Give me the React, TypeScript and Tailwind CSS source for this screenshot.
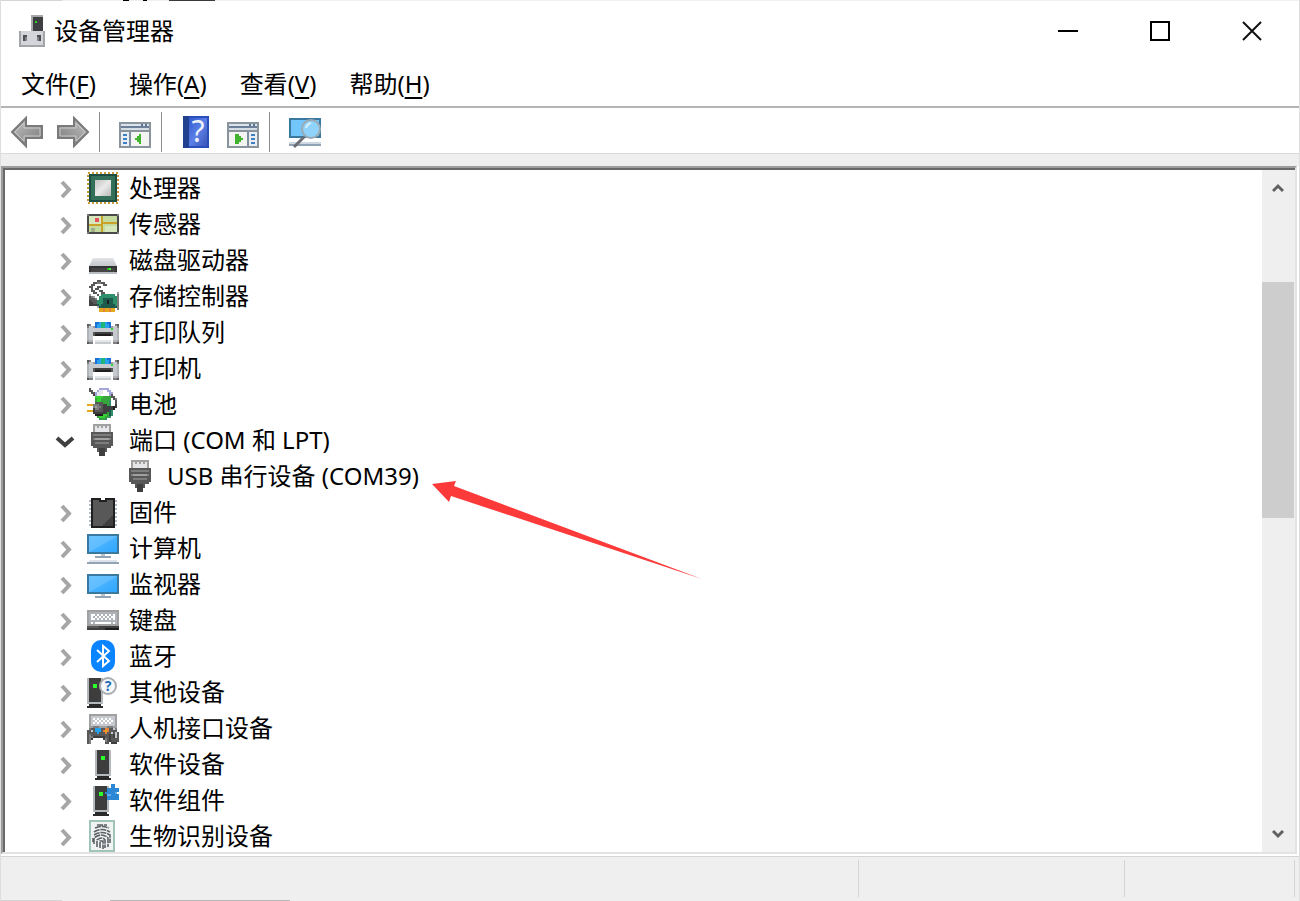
import React from 'react';

const palette: Record<string, string> = {
  k: '#1f1f1f',
  d: '#3f3f3f',
  m: '#585858',
  n: '#7d7d7d',
  g: '#a0a0a0',
  h: '#aeb4ba',
  l: '#c6c9cd',
  e: '#e4e6e9',
  w: '#ffffff',
  a: '#b4bccb',
  b: '#1b6fd6',
  c: '#27a3ee',
  t: '#1fb47a',
  r: '#e8833a',
  G: '#35d435',
  s: '#2f8f6a',
  S: '#35a53c',
  p: '#1f5b4d',
  y: '#e3a81c',
  v: '#a4a6dc',
};

// 16x16 bitmaps, one character per pixel
const usbMap = [
  '...ggggggggg....',
  '...gegegegeg....',
  '...geeeeeeeg....',
  '...geeeeeeeg....',
  '..mmmmmmmmmmm...',
  '..mnnnnnnnnnm...',
  '..mmmmmmmmmmm...',
  '..mngggggggnm...',
  '..mmmmmmmmmmm...',
  '..mmnnnnnnnmm...',
  '..mmmmmmmmmmm...',
  '...mmmmmmmmm....',
  '.....mdddm......',
  '.....mdddm......',
  '......ddd.......',
  '......ddd.......',
];

const printerMap = [
  '................',
  '................',
  '................',
  '....bbcttcbb....',
  'mn..bccttccb..nm',
  'nllgbccttccbglln',
  'hlllllllllllGllh',
  'hllllllllllllllh',
  'hllmddddddddmllh',
  'hllmkkkkkkkkmllh',
  'hll.wwwwwwww.llh',
  'hll.wwwwwwww.llh',
  'ghh.eeeeeeee.hhg',
  'mnn.llllllll.nnm',
  '................',
  '................',
];

const storageMap = [
  '.....mm.........',
  '...mmnnmm.......',
  '..mm....mm......',
  '.mm..mm.........',
  '..m.mm..........',
  '..mm..mm........',
  '...mm..mm......g',
  '.g...m.sssssss.n',
  '.mng..sssssssssn',
  '.mmmn.sspppppssn',
  '.dmmmsssppkppssn',
  '.ddmmsssppkppssn',
  '.ddddpspppppppsn',
  '.....gpppppppppn',
  '......yyryyryy.n',
  '......yyryyryy..',
];

const batteryMap = [
  '.m....vvvvv.....',
  '.mm..veewwvv....',
  '..mmveeewwwvv...',
  '...dveewwwwvm...',
  '....GGGGSSSSmm..',
  '....SGGSSSSS.mn.',
  '....SGGSSSSs..m.',
  '....mmmmSSSs..m.',
  'yyynnnmmddSs..d.',
  '...ngnnmdddddkd.',
  '...dnnmmdddddk..',
  'yyydmmmmdddps...',
  '...dddddddSps...',
  '....kkkkGGSps...',
  '.....SGGGSSs....',
  '......sSSs......',
];

const firmwareMap = [
  '................',
  '..kkkkk..kkkkk..',
  '.akmmmkkkkmmmka.',
  '..kmmmmmmmmmmk..',
  '.akmmmmmmmmmmka.',
  '..kmmmmmmmmmmk..',
  '.akmmmmmmmmmmka.',
  '..kmmmmmmmmmmk..',
  '.akmmmmmmmmmmka.',
  '..kmmmmmmmmmmk..',
  '.akmmmmmmmmmdka.',
  '..kmmmmmmmmddk..',
  '.akmmmmmmmdddka.',
  '..kmmmmmmddddk..',
  '.akmmmmmdddddka.',
  '..kkkkkkkkkkkk..',
];

const hidMap = [
  '................',
  '.gggggggggggggg.',
  '.gllllllllllllg.',
  '.glwlwlwlwlwllg.',
  '.gllwlwlwlwlwlg.',
  '.glwlwlwlwlwllg.',
  '.gllllllllllllg.',
  '.ggnnnggggnnngg.',
  '.nmmcccmmrrmmln.',
  'mmlmcccmryrmmmm.',
  'mmmmmcmmmrmmlmlm',
  'mnmmmmmmmmmdmdlm',
  'mnnddddddmmdmdlm',
  'mnd.....dnmdmmmm',
  'mn.......nmdmmmm',
  'mn.......mm.ddd.',
];

const keyboardMap = [
  '................',
  '................',
  '................',
  'gggggggggggggggg',
  'ghhhhhhhhhhhhhhg',
  'ghwwhwhwhwhwhwhg',
  'ghwhwhwhwhwhwwhg',
  'ghwwhwhwhwhwhwhg',
  'ghhhhhhhhhhhhhhg',
  'ghwhwwwwwwwwhwhg',
  'gggggggggggggggg',
  'mmmmmmdddddddddd',
  'dddddddddkkkkkkk',
  '................',
  '................',
  '................',
];

const Svg: React.FC<{ children: React.ReactNode }> = ({ children }) => (
  <svg viewBox="0 0 16 16" className="size-8 shrink-0 overflow-visible" aria-hidden="true">
    {children}
  </svg>
);

const Bitmap: React.FC<{ map: string[] }> = ({ map }) => (
  <Svg>
    <g shapeRendering="crispEdges">
      {map.flatMap((line, y) =>
        line.split('').map((ch, x) =>
          ch === '.' ? null : <rect key={`${x}-${y}`} x={x} y={y} width="1" height="1" fill={palette[ch]} />,
        ),
      )}
    </g>
  </Svg>
);

const CpuIcon = () => (
  <Svg>
    <defs>
      <linearGradient id="cpu" x1="0" y1="0" x2="1" y2="1">
        <stop offset="0" stopColor="#c2c2c2" />
        <stop offset="0.5" stopColor="#e9e9e9" />
        <stop offset="1" stopColor="#b9b9b9" />
      </linearGradient>
    </defs>
    <rect x="0.5" y="0.5" width="15" height="15" fill="none" stroke="#c99a3c" strokeDasharray="1 1" />
    <rect x="1" y="1" width="14" height="14" fill="#1d4d40" />
    <rect x="2" y="2" width="12" height="12" fill="#346f5a" />
    <rect x="4" y="4" width="8" height="8" fill="url(#cpu)" />
  </Svg>
);

const SensorIcon = () => (
  <Svg>
    <rect y="3" width="16" height="10" fill="#4a4a4a" />
    <rect x="1" y="4" width="14" height="8" fill="#c4dba0" />
    <path d="M1 4h6v4H1zM9 9h6v3H9z" fill="#d6e7bb" />
    <path d="M7 4h1v8H7zM1 8h7V7h7v1H8v1H1z" fill="#c9a227" />
    <path d="M4 5h2v2H4z" fill="#e8505b" />
    <path d="M2 10h2v2H2z" fill="#9db08a" />
    <path d="M0 3h1v1H0zM15 3h1v1h-1zM0 12h1v1H0zM15 12h1v1h-1z" fill="#7b7b7b" />
  </Svg>
);

const DiskIcon = () => (
  <Svg>
    <defs>
      <linearGradient id="disk" x1="0" y1="0" x2="0" y2="1">
        <stop offset="0" stopColor="#e2e4e6" />
        <stop offset="1" stopColor="#c3c7cb" />
      </linearGradient>
    </defs>
    <path d="M3 7h10l2 4H1z" fill="url(#disk)" />
    <rect x="1" y="11" width="14" height="4" fill="#b9bdc2" />
    <rect x="1" y="11" width="14" height="3" fill="#333" />
    <rect x="2" y="12" width="12" height="2" fill="#444" />
    <rect x="10" y="12" width="2" height="1" fill="#2fae2f" />
    <rect x="11" y="12" width="1" height="1" fill="#3df53d" />
  </Svg>
);

const Screen: React.FC<{ y: number }> = ({ y }) => (
  <g>
    <defs>
      <linearGradient id={`screen${y}`} x1="0" y1="0" x2="1" y2="1">
        <stop offset="0" stopColor="#6cc3ff" />
        <stop offset="0.5" stopColor="#5fbcff" />
        <stop offset="0.52" stopColor="#45b1ff" />
        <stop offset="1" stopColor="#2ea6ff" />
      </linearGradient>
    </defs>
    <rect y={y} width="16" height="10" fill="#3b789f" />
    <rect x="1" y={y + 1} width="14" height="8" fill={`url(#screen${y})`} />
    <rect x="7" y={y + 10} width="2" height="1" fill="#b9c4ce" />
    <rect x="4" y={y + 11} width="8" height="1" fill="#93a5b5" />
  </g>
);

const ComputerIcon = () => (
  <Svg>
    <Screen y={1} />
    <rect y="15" width="16" height="1" fill="#90a4b6" />
    <rect x="1" y="14" width="14" height="1" fill="#dde3e9" />
  </Svg>
);

const MonitorIcon = () => (
  <Svg>
    <Screen y={3} />
  </Svg>
);

const BluetoothIcon = () => (
  <Svg>
    <rect x="2" width="12" height="16" rx="5" fill="#0a84ff" />
    <path d="M5 5l6 5.500L8 13V3l3 2.500L5 11" fill="none" stroke="#fff" />
  </Svg>
);

const Tower: React.FC<{ x: number }> = ({ x }) => (
  <g>
    <rect x={x} y="1" width="8" height="13" fill="#b3b8bd" />
    <rect x={x + 1} y="1" width="6" height="12" fill="#3d3d3d" />
    <rect x={x + 1} y="14" width="6" height="1" fill="#2a2a2a" />
    <rect x={x} y="15" width="8" height="1" fill="#2a2a2a" />
    <rect x={x + 3} y="4" width="2" height="2" fill="#2dfc2d" />
  </g>
);

const OtherIcon = () => (
  <Svg>
    <Tower x={0} />
    <circle cx="10.5" cy="5" r="4" fill="#f6f8fa" stroke="#a9adb1" />
    <text x="10.5" y="7.5" textAnchor="middle" fontSize="7" fontWeight="700" fill="#1f6fb8">
      ?
    </text>
  </Svg>
);

const SoftwareIcon = () => (
  <Svg>
    <Tower x={4} />
  </Svg>
);

const ComponentIcon = () => (
  <Svg>
    <Tower x={3} />
    <path d="M10 2h2V0h2v2h2v2h-1v1h1v3h-6V5H9V4h1z" fill="#2b87d3" />
    <path d="M10 5h2v1h-2zM14 4h1v1h-1z" fill="#63aeea" />
  </Svg>
);

const FingerprintIcon = () => (
  <Svg>
    <rect x="1" width="13" height="16" fill="#9fc4ba" />
    <rect x="2" y="1" width="11" height="14" fill="#f1f3f3" />
    <g fill="none" stroke="#5c6064" strokeWidth="0.8" strokeDasharray="3 0.4">
      <path d="M5 2.5h5M4 4q3.500-1.500 7 0M3.500 6q4-2.500 8 0M3.500 7.500q4-2.500 8 0v4" />
      <path d="M3.500 12V9q4-3 7 0v4.500M5 13.500V10q2.500-2 4 0v4M6.500 14v-3.500h1.500v4M3 9v2" />
    </g>
  </Svg>
);

const ManagerIcon = () => (
  <Svg>
    <rect x="7" width="6" height="8" fill="#a5a8aa" />
    <rect x="8" y="1" width="5" height="7" fill="#3d3f40" />
    <rect x="9" y="3" width="1" height="1" fill="#2fd32f" />
    <rect x="1" y="8" width="13" height="8" fill="#a3a4a8" />
    <rect x="2" y="8" width="11" height="7" fill="#d4d5da" />
    <path d="M3 10h2v3H3zM10 10h2v3h-2z" fill="#4c4d50" />
    <path d="M4 11h1v2H4zM10 11h1v2h-1z" fill="#85868a" />
  </Svg>
);

const ArrowIcon: React.FC<{ flip?: boolean }> = ({ flip }) => (
  <Svg>
    <defs>
      <linearGradient id="arrow" x1="0" y1="0" x2="1" y2="1">
        <stop offset="0" stopColor="#c4c4c4" />
        <stop offset="1" stopColor="#777" />
      </linearGradient>
    </defs>
    <g transform={flip ? 'translate(16 0) scale(-1 1)' : undefined}>
      <path d="M0.500 8L7.500 1v4h8v6h-8v4z" fill="url(#arrow)" stroke="#7a7a7a" />
      <path d="M2 8l4.500-4.500V6h8v4h-8v2.500z" fill="none" stroke="#c9c9c9" strokeWidth="0.5" />
    </g>
  </Svg>
);

const PaneIcon: React.FC<{ right?: boolean }> = ({ right }) => (
  <Svg>
    <g shapeRendering="crispEdges">
      <rect y="3" width="16" height="13" fill="#8a949c" />
      <rect x="1" y="4" width="14" height="1" fill="#dbe4ec" />
      <path d="M11 4h1v1h-1zM13 4h1v1h-1z" fill="#5b7290" />
      <rect x="1" y="5" width="14" height="1" fill="#6b7f98" />
      <rect x="1" y="6" width="14" height="1" fill="#d6dde4" />
      <rect x="1" y="8" width="14" height="7" fill="#f4f4f2" />
      {right ? (
        <>
          <rect x="10" y="8" width="1" height="7" fill="#7d8ea0" />
          <rect x="11" y="8" width="4" height="7" fill="#e9eef5" />
          <path d="M12 9h2v1h-2zM12 11h2v1h-2zM12 13h2v1h-2z" fill="#3f7fc4" />
          <path d="M4 9h2v1h1v1h1v1H7v1H6v1H4z" fill="#42b32e" />
        </>
      ) : (
        <>
          <rect x="1" y="8" width="4" height="7" fill="#e9eef5" />
          <rect x="5" y="8" width="1" height="7" fill="#7d8ea0" />
          <path d="M2 9h2v1H2zM2 11h2v1H2zM2 13h2v1H2z" fill="#3f7fc4" />
          <path d="M11 9h-1v1H9v1H8v1h1v1h1v1h1z" fill="#42b32e" />
        </>
      )}
    </g>
  </Svg>
);

const HelpIcon = () => (
  <Svg>
    <defs>
      <linearGradient id="help" x1="0" y1="0" x2="1" y2="1">
        <stop offset="0" stopColor="#3159cf" />
        <stop offset="0.5" stopColor="#5c80e6" />
        <stop offset="1" stopColor="#3a55b8" />
      </linearGradient>
    </defs>
    <rect x="1" width="13" height="16" fill="#2b4fb8" />
    <rect x="1" width="3" height="16" fill="#21408f" />
    <rect x="4" y="1" width="9" height="14" fill="url(#help)" />
    <text x="8.500" y="13" textAnchor="middle" fontSize="15" fill="#eef1fb">
      ?
    </text>
  </Svg>
);

const ScanIcon = () => (
  <Svg>
    <rect y="1" width="16" height="10" fill="#3b789f" />
    <rect x="1" y="2" width="14" height="8" fill="#72c6fb" />
    <path d="M0 13h16v1H0z" fill="#cfd8e0" />
    <path d="M0 14h16v1H0z" fill="#8fa3b5" />
    <path d="M7.500 10.500L2.500 15.500" stroke="#6b6f73" strokeWidth="1.500" />
    <circle cx="11" cy="6.500" r="4.500" fill="#8fd2fa" stroke="#9ba9b3" />
    <path d="M8.500 6q0.500-2 2.500-2.500" fill="none" stroke="#d9f1ff" />
  </Svg>
);

const menus = [
  { label: '文件', key: 'F' },
  { label: '操作', key: 'A' },
  { label: '查看', key: 'V' },
  { label: '帮助', key: 'H' },
];

type Device = { name: string; icon: React.ReactNode; children?: Device[] };

const devices: Device[] = [
  { name: '处理器', icon: <CpuIcon /> },
  { name: '传感器', icon: <SensorIcon /> },
  { name: '磁盘驱动器', icon: <DiskIcon /> },
  { name: '存储控制器', icon: <Bitmap map={storageMap} /> },
  { name: '打印队列', icon: <Bitmap map={printerMap} /> },
  { name: '打印机', icon: <Bitmap map={printerMap} /> },
  { name: '电池', icon: <Bitmap map={batteryMap} /> },
  {
    name: '端口 (COM 和 LPT)',
    icon: <Bitmap map={usbMap} />,
    children: [{ name: 'USB 串行设备 (COM39)', icon: <Bitmap map={usbMap} /> }],
  },
  { name: '固件', icon: <Bitmap map={firmwareMap} /> },
  { name: '计算机', icon: <ComputerIcon /> },
  { name: '监视器', icon: <MonitorIcon /> },
  { name: '键盘', icon: <Bitmap map={keyboardMap} /> },
  { name: '蓝牙', icon: <BluetoothIcon /> },
  { name: '其他设备', icon: <OtherIcon /> },
  { name: '人机接口设备', icon: <Bitmap map={hidMap} /> },
  { name: '软件设备', icon: <SoftwareIcon /> },
  { name: '软件组件', icon: <ComponentIcon /> },
  { name: '生物识别设备', icon: <FingerprintIcon /> },
];

const Chevron: React.FC<{ open: boolean }> = ({ open }) => (
  <svg viewBox="0 0 20 20" className="size-5" fill="none" strokeWidth="4" aria-hidden="true">
    {open ? <path d="M2 8l8 7 8-7" stroke="#404040" /> : <path d="M7 4l7 7.500-7 7.500" stroke="#a6a6a6" />}
  </svg>
);

// red pointer drawn over the blank part of the tree
const Pointer = () => (
  <svg viewBox="0 0 271 100" className="absolute left-full top-[22px] ml-3 h-[100px] w-[271px]" aria-hidden="true">
    <path d="M1 4L25 1 23 6 271 99 20 16 18 22z" fill="#fc3a3a" />
  </svg>
);

const ToolButton: React.FC<{ label: string; children: React.ReactNode }> = ({ label, children }) => (
  <button type="button" aria-label={label} className="shrink-0">
    {children}
  </button>
);

const Divider = () => <div className="ml-2.5 mr-[19px] h-10 w-px bg-[#8c8c8c]" />;

export default function App() {
  return (
    <div className="flex h-screen flex-col overflow-hidden border-x border-[#dedede] bg-white font-['Noto_Sans','Noto_Sans_CJK_SC',sans-serif] text-2xl text-black">
      {/* window edge, with bits of the window behind it */}
      <div className="flex h-px shrink-0 bg-[#efefef]">
        <div className="mr-[61px] w-[61px] bg-[#d5d5d5]" />
        <div className="mr-3.5 w-1.5 bg-black" />
        <div className="mr-[22px] w-1 bg-black" />
        <div className="w-[46px] bg-[#3a3a3a]" />
      </div>

      <header className="flex h-[60px] shrink-0 items-center pl-4 pr-px">
        <ManagerIcon />
        <h1 className="ml-[5px] flex-1">设备管理器</h1>
        <button type="button" aria-label="最小化" className="flex h-full w-[92px] items-center justify-center">
          <span className="h-0.5 w-5 bg-black" />
        </button>
        <button type="button" aria-label="最大化" className="flex h-full w-[92px] items-center justify-center">
          <span className="size-5 border-2 border-black" />
        </button>
        <button type="button" aria-label="关闭" className="flex h-full w-[92px] items-center justify-center">
          <svg viewBox="0 0 20 20" className="size-5" stroke="#111" strokeWidth="2" aria-hidden="true">
            <path d="M1 1l18 18M19 1L1 19" />
          </svg>
        </button>
      </header>

      <nav className="flex h-[45px] shrink-0 items-center gap-[33px] pl-5 pt-px">
        {menus.map((m) => (
          <button key={m.key} type="button">
            {m.label}(<span className="underline decoration-2 underline-offset-4">{m.key}</span>)
          </button>
        ))}
      </nav>

      <div className="flex h-12 shrink-0 items-center border-b border-t-2 border-b-[#dadada] border-t-[#b4b4b4] pl-2.5 pt-0.5">
        <div className="flex gap-3.5">
          <ToolButton label="后退">
            <ArrowIcon />
          </ToolButton>
          <ToolButton label="前进">
            <ArrowIcon flip />
          </ToolButton>
        </div>
        <Divider />
        <ToolButton label="显示/隐藏控制台树">
          <PaneIcon />
        </ToolButton>
        <Divider />
        <div className="flex gap-3.5">
          <ToolButton label="帮助">
            <HelpIcon />
          </ToolButton>
          <ToolButton label="显示/隐藏操作窗格">
            <PaneIcon right />
          </ToolButton>
        </div>
        <Divider />
        <ToolButton label="扫描检测硬件改动">
          <ScanIcon />
        </ToolButton>
      </div>

      <div className="h-3 shrink-0 bg-[#efefef]" />

      <main className="mb-0.5 mr-0.5 flex min-h-0 flex-1 border-2 border-b-[#e3e3e3] border-l-[#9d9d9d] border-r-[#e3e3e3] border-t-[#9d9d9d]">
        <div className="flex min-w-0 flex-1 border-l-2 border-t-2 border-[#696969]">
          <ul className="min-w-0 flex-1 overflow-hidden pl-[50px]">
            {devices.map((d) => (
              <li key={d.name}>
                <div className="flex h-9 items-center">
                  <button type="button" aria-label={d.children ? '折叠' : '展开'} className="mr-3 shrink-0">
                    <Chevron open={!!d.children} />
                  </button>
                  {d.icon}
                  <span className="ml-2.5 whitespace-nowrap">{d.name}</span>
                </div>
                {d.children && (
                  <ul className="pl-[70px]">
                    {d.children.map((c) => (
                      <li key={c.name} className="relative flex h-9 w-fit items-center">
                        {c.icon}
                        <span className="ml-2.5 whitespace-nowrap">{c.name}</span>
                        <Pointer />
                      </li>
                    ))}
                  </ul>
                )}
              </li>
            ))}
          </ul>

          <div className="flex w-[33px] shrink-0 flex-col bg-[#efefef] pr-px">
            <button type="button" aria-label="向上滚动" className="flex h-9 items-center justify-center">
              <svg viewBox="0 0 12 10" className="h-2.5 w-3" fill="none" stroke="#606060" strokeWidth="3" aria-hidden="true">
                <path d="M1 8l5-5 5 5" />
              </svg>
            </button>
            <div className="flex-[76]" />
            <div className="flex-[236] bg-[#cdcdcd]" />
            <div className="flex-[298]" />
            <button type="button" aria-label="向下滚动" className="flex h-9 items-center justify-center">
              <svg viewBox="0 0 12 10" className="h-2.5 w-3" fill="none" stroke="#606060" strokeWidth="3" aria-hidden="true">
                <path d="M1 2l5 5 5-5" />
              </svg>
            </button>
          </div>
        </div>
      </main>

      <footer className="flex h-11 shrink-0 border-t border-[#d5d5d5] bg-[#efefef] py-[3px] pr-1">
        <div className="flex-1 border-r border-[#d5d5d5]" />
        <div className="w-[266px] border-r border-[#d5d5d5]" />
        <div className="w-[170px] border-r border-[#d5d5d5]" />
      </footer>
      <div className="flex h-px shrink-0 bg-[#efefef]">
        <div className="mr-12 w-[61px] bg-[#d5d5d5]" />
        <div className="w-[180px] bg-[#b5b5b5]" />
      </div>
    </div>
  );
}
